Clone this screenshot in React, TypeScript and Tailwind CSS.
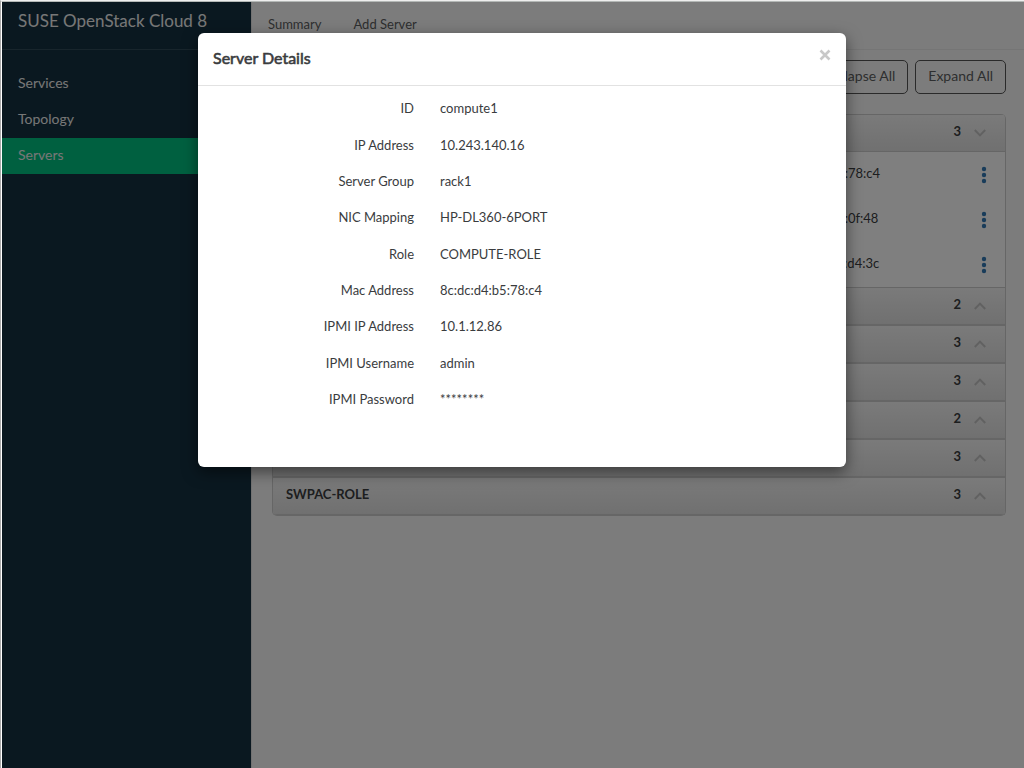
import React from 'react';

const navItems = ['Services', 'Topology', 'Servers'];
const tabs = ['Summary', 'Add Server'];

type Group = { name?: string; count: number; macs?: string[] };

const groups: Group[] = [
  {
    count: 3,
    macs: ['8c:dc:d4:b5:78:c4', '8c:dc:d4:b5:0f:48', '8c:dc:dd:bd:d4:3c'],
  },
  { count: 2 },
  { count: 3 },
  { count: 3 },
  { count: 2 },
  { count: 3 },
  { name: 'SWPAC-ROLE', count: 3 },
];

const details: [string, string][] = [
  ['ID', 'compute1'],
  ['IP Address', '10.243.140.16'],
  ['Server Group', 'rack1'],
  ['NIC Mapping', 'HP-DL360-6PORT'],
  ['Role', 'COMPUTE-ROLE'],
  ['Mac Address', '8c:dc:d4:b5:78:c4'],
  ['IPMI IP Address', '10.1.12.86'],
  ['IPMI Username', 'admin'],
  ['IPMI Password', '********'],
];

function Chevron({ open }: { open: boolean }) {
  return (
    <svg width="12" height="8" viewBox="0 0 12 8" fill="none" stroke="#c2c2c2" strokeWidth="2">
      <path d={open ? 'M0.8 1L6 6.4L11.2 1' : 'M0.8 7L6 1.6L11.2 7'} />
    </svg>
  );
}

function Dots() {
  return (
    <svg width="4" height="16" viewBox="0 0 4 16" fill="#3278b4" className="overflow-visible">
      <circle cx="2" cy="2" r="2.2" />
      <circle cx="2" cy="8" r="2.2" />
      <circle cx="2" cy="14" r="2.2" />
    </svg>
  );
}

function Sidebar() {
  return (
    <aside className="w-[249px] shrink-0 bg-[#143040] text-[#eeeeee]">
      <h1 className="h-12 border-b border-[#304a58] px-4 pt-1 text-[17px] leading-[30px]">
        SUSE OpenStack Cloud 8
      </h1>
      <nav className="mt-4 flex flex-col text-sm">
        {navItems.map((item) => (
          <a
            key={item}
            href="#"
            className={`h-9 px-4 leading-[34px] ${item === 'Servers' ? 'bg-[#00c081]' : ''}`}
          >
            {item}
          </a>
        ))}
      </nav>
    </aside>
  );
}

function ServerGroup({ group }: { group: Group }) {
  return (
    <section>
      <button
        type="button"
        className="flex h-[38px] w-full items-center border-y border-[#cccccc] bg-linear-to-b from-[#f5f5f5] to-[#e1e1e1] pr-[19px] pb-[3px] pl-[13px] text-[13px] font-bold"
      >
        <span>{group.name}</span>
        <span className="mr-[13px] ml-auto">{group.count}</span>
        <span className="pt-[2px]">
          <Chevron open={!!group.macs} />
        </span>
      </button>
      {group.macs?.map((mac) => (
        <div key={mac} className="flex h-[45px] items-center justify-between bg-white pr-[19px] pl-[505px] text-[13px]">
          <span className="pb-px">{mac}</span>
          <button type="button" aria-label="Server actions">
            <Dots />
          </button>
        </div>
      ))}
    </section>
  );
}

function ServerDialog() {
  return (
    <div
      role="dialog"
      aria-modal="true"
      aria-labelledby="dialog-title"
      className="mt-[31px] ml-[196px] w-[648px] rounded-md bg-white pb-[49px] shadow-[0_5px_15px_rgba(0,0,0,0.5)]"
    >
      <header className="flex h-[53px] items-center justify-between border-b border-[#e2e2e2] px-[15px] pb-[2px]">
        <h2 id="dialog-title" className="text-base font-normal [-webkit-text-stroke:0.6px_currentColor]">
          Server Details
        </h2>
        <button type="button" aria-label="Close" className="pb-[6px]">
          <svg width="12" height="12" viewBox="0 0 12 12" stroke="#c8c8c8" strokeWidth="2.6">
            <path d="M1.5 1.5L10.5 10.5M10.5 1.5L1.5 10.5" />
          </svg>
        </button>
      </header>
      <dl className="mt-[5px] grid h-[327px] auto-rows-fr text-[13px]">
        {details.map(([label, value]) => (
          <div key={label} className="flex items-center gap-[26px]">
            <dt className="w-1/3 text-right">{label}</dt>
            <dd className="flex-1">{value}</dd>
          </div>
        ))}
      </dl>
    </div>
  );
}

export default function App() {
  return (
    <div className="min-h-screen border-t border-l border-t-[#eeeeee] border-l-[#aaaaaa] font-['Lato',sans-serif] text-[#3a3c3e]">
      <div className="relative flex min-h-[calc(100vh-1px)] border-t border-l border-t-[#b4b8b6] border-l-white">
        <Sidebar />
        <main className="min-w-0 flex-1 border-l border-[#e4e4e4] bg-[#f9f9f9]">
          <nav className="flex h-12 gap-8 border-b border-[#ebebeb] px-4 pt-3 text-[13px] leading-5 text-[#5c5e60]">
            {tabs.map((tab) => (
              <a key={tab} href="#">
                {tab}
              </a>
            ))}
          </nav>
          <div className="pt-[10px] pr-[18px] pl-5">
            <div className="flex justify-end gap-[7px] text-sm text-[#5c5e60]">
              <button type="button" className="h-[34px] rounded-[5px] border border-[#555555] px-3 pb-[3px]">
                Collapse All
              </button>
              <button type="button" className="h-[34px] rounded-[5px] border border-[#555555] px-3 pb-[3px]">
                Expand All
              </button>
            </div>
            <div className="mt-5 overflow-hidden rounded-[5px] border-x border-b border-[#cccccc]">
              {groups.map((group, i) => (
                <ServerGroup key={i} group={group} />
              ))}
            </div>
          </div>
        </main>
        <div className="absolute inset-0 bg-black/50">
          <ServerDialog />
        </div>
      </div>
    </div>
  );
}
